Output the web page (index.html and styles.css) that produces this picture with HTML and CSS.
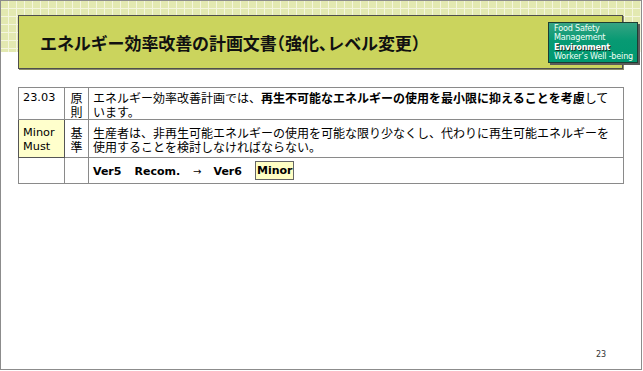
FILE: index.html
```html
<!DOCTYPE html>
<html lang="ja">
<head>
<meta charset="utf-8">
<link rel="stylesheet" href="styles.css">
</head>
<body>
<div class="slide">
  <header class="head">
    <div class="title-box">
      <h1 class="title">エネルギー効率改善の計画文書<span class="half">（</span>強化<span class="half">、</span>レベル変更<span class="half">）</span></h1>
    </div>
    <div class="logo">
      <div>Food Safety</div>
      <div>Management</div>
      <div class="logo-strong">Environment</div>
      <div>Worker’s Well -being</div>
    </div>
  </header>
  <table class="req">
    <tr class="r1">
      <td class="c-id lat">23.03</td>
      <td class="c-kind">原<br>則</td>
      <td class="c-text">エネルギー効率改善計画では、<b>再生不可能なエネルギーの使用を最小限に抑えることを考慮</b>して<br>います。</td>
    </tr>
    <tr class="r2">
      <td class="c-id lat level">Minor<br>Must</td>
      <td class="c-kind">基<br>準</td>
      <td class="c-text">生産者は、非再生可能エネルギーの使用を可能な限り少なくし、代わりに再生可能エネルギーを<br>使用することを検討しなければならない。</td>
    </tr>
    <tr class="r3">
      <td class="c-id"></td>
      <td class="c-kind"></td>
      <td class="c-text lat ver"><span class="v">Ver5</span><span class="v">Recom.</span><span class="v arrow">→</span><span class="v">Ver6</span><span class="badge">Minor</span></td>
    </tr>
  </table>
  <div class="page-no">23</div>
</div>
</body>
</html>
```
FILE: styles.css
```css
* { box-sizing: border-box; }
html, body { margin: 0; padding: 0; background: #ffffff; }
.slide {
  position: relative;
  width: 642px;
  height: 370px;
  border: 1px solid #8c8c8c;
  background: #ffffff;
  display: flex;
  flex-direction: column;
  font-family: "Noto Sans CJK JP", sans-serif;
  color: #000;
}
.head {
  position: relative;
  height: 68px;
  padding: 14px 18px 0 17px;
  background-image:
    repeating-linear-gradient(to right, transparent 0, transparent 7px, #f4f6de 7px, #f4f6de 8px),
    repeating-linear-gradient(to bottom, transparent 0, transparent 7px, #f4f6de 7px, #f4f6de 8px),
    linear-gradient(#e3e9b1, #e3e9b1);
  background-size: 100% 51px;
  background-repeat: no-repeat;
}
.title-box {
  height: 54px;
  background: #cbd45d;
  border: 1px solid #4e4e4e;
  box-shadow: 1px 1px 0 #8a8a6a;
  display: flex;
  align-items: center;
  padding-left: 21px;
}
.title {
  margin: 0;
  font-size: 17px;
  font-weight: 700;
  line-height: 1;
  letter-spacing: -0.1px;
  color: #111;
}
.half { font-feature-settings: "halt"; }
.logo {
  position: absolute;
  left: 547px;
  top: 21px;
  width: 90px;
  height: 41px;
  padding: 1px 0 0 5px;
  background: linear-gradient(#36a383, #079a73 45%, #009870);
  border: 1px solid #1d3d33;
  box-shadow: 2px 2px 0 #5a5a5a;
  color: #f0fff8;
  font-family: "DejaVu Sans", sans-serif;
  font-size: 8.1px;
  line-height: 9.3px;
  letter-spacing: -0.2px;
  white-space: nowrap;
}
.logo-strong { font-weight: 700; color: #ffffff; text-shadow: 1px 1px 0 #1b2b24; }
.req {
  margin: 18px 0 0 17px;
  width: 606px;
  border-collapse: collapse;
  border: 1px solid #444;
  font-size: 12px;
}
.req td {
  border: 1px solid #8a8a8a;
  padding: 0;
  vertical-align: top;
  line-height: 13.5px;
}
.lat { font-family: "DejaVu Sans", "Noto Sans CJK JP", sans-serif; font-size: 11.3px; }
.c-id { width: 46px; padding: 3px 0 0 4px !important; }
.c-kind { width: 24px; text-align: center; padding-top: 3px !important; }
.c-text { padding: 3px 0 0 4px !important; }
.r1 td { height: 32px; }
.r2 td { height: 38px; padding-top: 6px !important; }
.level { background: #ffffcc; border: 1px solid #555 !important; }
.r3 td { height: 26px; }
.ver { font-weight: 700; padding-top: 7px !important; padding-left: 4px !important; font-size: 11px; }
.v { margin-right: 13px; }
.arrow { font-weight: 400; margin-right: 12px; font-size: 10px; }
.badge {
  display: inline-block;
  background: #ffffc4;
  border: 1px solid #666;
  padding: 2px 1px 2px 1px;
  line-height: 13px;
  margin-top: -4px;
  vertical-align: top;
}
.page-no {
  position: absolute;
  left: 595px;
  top: 349px;
  font-family: "DejaVu Sans", sans-serif;
  font-size: 8px;
  color: #333;
}
```
